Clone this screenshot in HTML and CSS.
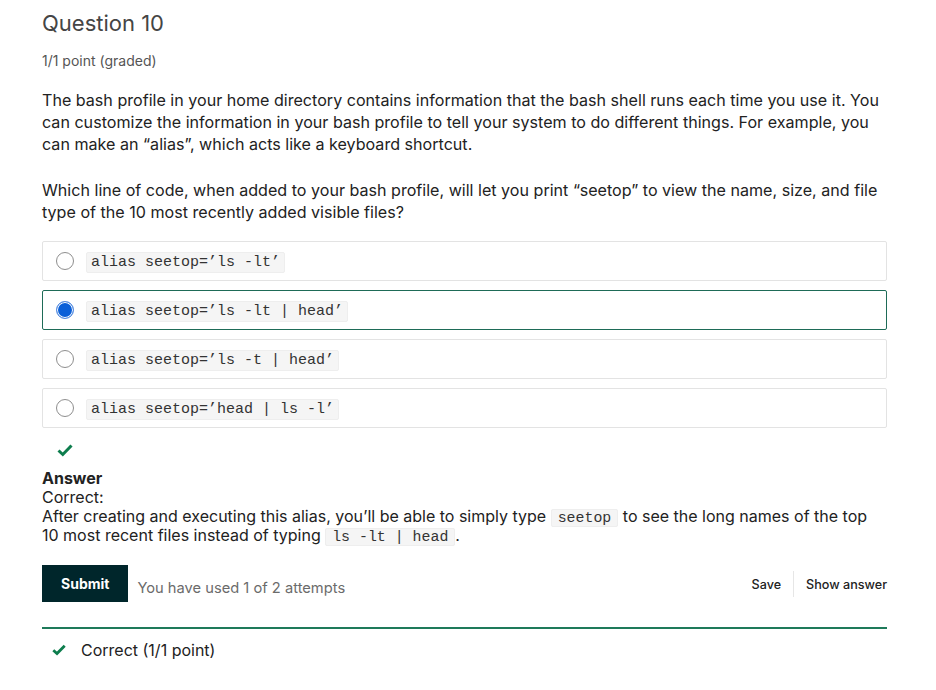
FILE: index.html
```html
<!DOCTYPE html>
<html>
<head>
<meta charset="utf-8">
<link rel="stylesheet" href="styles.css">
</head>
<body>
<div class="problem">
  <h2 class="title">Question 10</h2>
  <div class="points">1/1 point (graded)</div>
  <p class="text">The bash profile in your home directory contains information that the bash shell runs each time you use it. You can customize the information in your bash profile to tell your system to do different things. For example, you can make an “alias”, which acts like a keyboard shortcut.</p>
  <p class="text q">Which line of code, when added to your bash profile, will let you print “seetop” to view the name, size, and file type of the 10 most recently added visible files?</p>
  <div class="options">
    <label class="option"><span class="radio"></span><code class="code">alias seetop=’ls -lt’</code></label>
    <label class="option selected"><span class="radio checked"></span><code class="code">alias seetop=’ls -lt | head’</code></label>
    <label class="option"><span class="radio"></span><code class="code">alias seetop=’ls -t | head’</code></label>
    <label class="option"><span class="radio"></span><code class="code">alias seetop=’head | ls -l’</code></label>
  </div>
  <div class="status-icon">
    <svg width="16" height="14" viewBox="0 0 16 14"><path d="M1.5 7.5 L5.8 11.5 L14.5 2.5" fill="none" stroke="#0d7d4d" stroke-width="3"/></svg>
  </div>
  <div class="answer">
    <div class="answer-title">Answer</div>
    <div>Correct:</div>
    <div>After creating and executing this alias, you’ll be able to simply type <code class="code inline">seetop</code> to see the long names of the top 10 most recent files instead of typing <code class="code inline">ls -lt | head</code>.</div>
  </div>
  <div class="actions">
    <button class="submit">Submit</button>
    <span class="attempts">You have used 1 of 2 attempts</span>
    <div class="right-actions">
      <span class="link">Save</span>
      <span class="sep"></span>
      <span class="link">Show answer</span>
    </div>
  </div>
  <div class="notification">
    <svg width="14" height="12" viewBox="0 0 14 12"><path d="M1.3 6.3 L5 9.6 L12.7 1.8" fill="none" stroke="#0d7d4d" stroke-width="2.8"/></svg>
    <span>Correct (1/1 point)</span>
  </div>
</div>
</body>
</html>
```
FILE: styles.css
```css
body {
  margin: 0;
  background: #fff;
  font-family: Inter, "Noto Sans", sans-serif;
  color: #222;
}
.problem {
  width: 845px;
  padding: 9px 0 0 42px;
}
.title {
  margin: 0;
  font-size: 22px;
  font-weight: 400;
  color: #454545;
  line-height: 28px;
}
.points {
  margin-top: 14px;
  font-size: 14px;
  color: #555;
  line-height: 20px;
}
.text {
  margin: 18px 0 0 0;
  font-size: 16.1px;
  line-height: 22px;
  color: #222;
}
.text.q {
  margin-top: 24px;
}
.options {
  margin-top: 18px;
  display: flex;
  flex-direction: column;
  gap: 9px;
}
.option {
  display: flex;
  align-items: center;
  height: 38px;
  border: 1px solid #e3e3e3;
  border-radius: 2px;
  padding-left: 13px;
}
.option.selected {
  border-color: #1e6b57;
}
.radio {
  width: 18px;
  height: 18px;
  border: 1px solid #8e8e8e;
  border-radius: 50%;
  box-sizing: border-box;
  margin-right: 12px;
}
.radio.checked {
  border: 1px solid #5b8fe0;
  background: #0a5fd8;
  box-shadow: inset 0 0 0 1px #fff;
}
.code {
  font-family: "Liberation Mono", "Courier New", monospace;
  font-size: 15px;
  background: #f5f5f5;
  border: 1px solid #eee;
  border-radius: 2px;
  padding: 1px 4px 0 4px;
  margin-top: 3px;
  color: #333;
  line-height: 18px;
}
.code.inline {
  font-size: 14.9px;
  padding: 0 6px;
  margin-top: 0;
  line-height: 15px;
}
.status-icon {
  margin: 13px 0 0 15px;
  height: 16px;
}
.answer {
  margin-top: 12px;
  font-size: 16px;
  line-height: 19px;
  color: #222;
}
.answer-title {
  font-weight: 700;
}
.actions {
  margin-top: 20px;
  display: flex;
  align-items: center;
}
.submit {
  background: #00262b;
  color: #fff;
  border: none;
  font-family: Inter, sans-serif;
  font-size: 14px;
  font-weight: 700;
  height: 37px;
  padding: 0 19px;
  border-radius: 0;
}
.attempts {
  margin-left: 9px;
  font-size: 14.7px;
  color: #6b6b6b;
  padding-top: 8px;
}
.right-actions {
  margin-left: auto;
  display: flex;
  align-items: center;
  padding-top: 1px;
}
.link {
  font-size: 12.6px;
  font-weight: 500;
  color: #222;
}
.sep {
  width: 1px;
  height: 26px;
  background: #e6e6e6;
  margin: 0 12px;
}
.notification {
  margin-top: 25px;
  border-top: 2px solid #1e7a5a;
  display: flex;
  align-items: center;
  padding: 11px 0 0 10px;
  gap: 15px;
  font-size: 16px;
  color: #222;
}
```
